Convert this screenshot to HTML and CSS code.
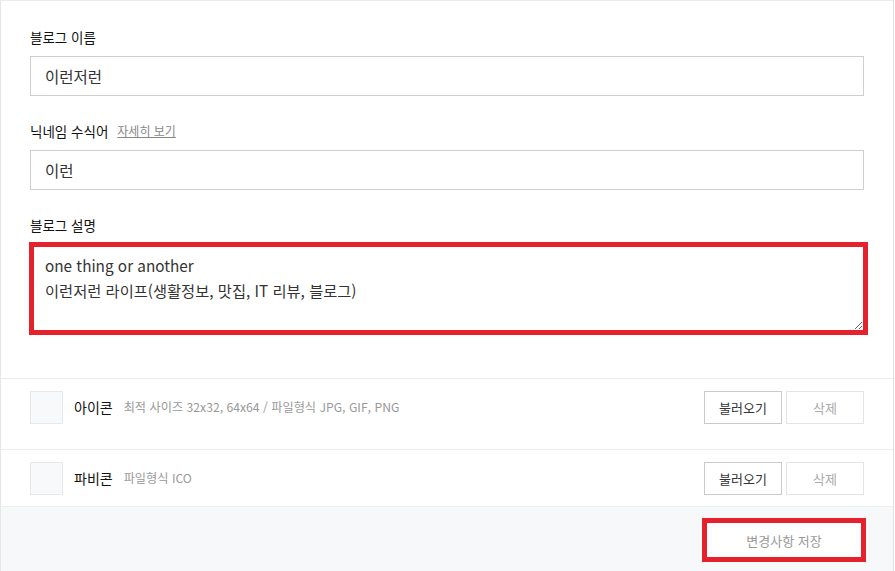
FILE: index.html
```html
<!DOCTYPE html>
<html lang="ko">
<head>
<meta charset="utf-8">
<link rel="stylesheet" href="styles.css">
</head>
<body>
<div class="panel">
  <div class="fields">
    <div class="field">
      <div class="label">블로그 이름</div>
      <input class="input" type="text" value="이런저런">
    </div>
    <div class="field">
      <div class="label">닉네임 수식어 <a class="more" href="#">자세히 보기</a></div>
      <input class="input" type="text" value="이런">
    </div>
    <div class="field">
      <div class="label label-desc">블로그 설명</div>
      <textarea class="textarea">one thing or another
이런저런 라이프(생활정보, 맛집, IT 리뷰, 블로그)</textarea>
    </div>
  </div>
  <div class="row row-first">
    <div class="thumb"></div>
    <div class="row-title">아이콘</div>
    <div class="row-desc">최적 사이즈 32x32, 64x64 / 파일형식 JPG, GIF, PNG</div>
    <div class="btns">
      <button class="btn">불러오기</button>
      <button class="btn btn-off">삭제</button>
    </div>
  </div>
  <div class="row">
    <div class="thumb"></div>
    <div class="row-title">파비콘</div>
    <div class="row-desc">파일형식 ICO</div>
    <div class="btns">
      <button class="btn">불러오기</button>
      <button class="btn btn-off">삭제</button>
    </div>
  </div>
  <div class="footer">
    <button class="save">변경사항 저장</button>
  </div>
</div>
</body>
</html>
```
FILE: styles.css
```css
* { box-sizing: border-box; }
html, body { margin: 0; padding: 0; background: #fff; }
body {
  font-family: "Noto Sans CJK KR", "Noto Sans", sans-serif;
  color: #333;
}
.panel {
  width: 894px;
  height: 571px;
  border-left: 1px solid #e6e6e6;
  border-right: 1px solid #e2e2e2;
  border-top: 1px solid #ececec;
  display: flex;
  flex-direction: column;
}
.fields {
  padding: 26px 29px 43px 29px;
  display: flex;
  flex-direction: column;
  gap: 25px;
}
.field { display: flex; flex-direction: column; }
.label {
  font-size: 13.5px;
  line-height: 20px;
  color: #111;
  font-weight: 400;
  margin-bottom: 9px;
  display: flex;
  align-items: center;
}
.label-desc { margin-bottom: 7px; }
.more {
  font-size: 12px;
  color: #888;
  text-decoration: underline;
  margin-left: 9px;
  font-weight: 400;
}
.input {
  width: 834px;
  height: 40px;
  border: 1px solid #cfcfcf;
  padding: 0 14px;
  font-family: inherit;
  font-size: 15.5px;
  color: #333;
  outline: none;
  background: #fff;
}
.textarea {
  width: 839px;
  height: 93px;
  margin-left: -1px;
  border: 5px solid #e5212b;
  padding: 6px 11px;
  font-family: inherit;
  font-size: 15.3px;
  line-height: 25px;
  color: #333;
  outline: none;
  resize: vertical;
  background: #fff;
}
.row {
  display: flex;
  align-items: center;
  padding: 12px 29px 12px 29px;
  border-top: 1px solid #ececec;
  height: 57px;
}
.row-first { height: 71px; align-items: flex-start; }
.thumb {
  width: 33px;
  height: 33px;
  background: #f8f9fb;
  border: 1px solid #e8e8e8;
}
.row-first .row-title, .row-first .row-desc { line-height: 33px; }
.row-title {
  margin-left: 11px;
  font-size: 14px;
  color: #111;
  font-weight: 400;
}
.row-desc {
  margin-left: 11px;
  font-size: 12.2px;
  color: #999;
}
.btns {
  margin-left: auto;
  display: flex;
  gap: 4px;
}
.btn {
  width: 78px;
  height: 33px;
  background: #fff;
  border: 1px solid #cacaca;
  font-family: inherit;
  font-size: 13px;
  color: #333;
  padding: 0;
}
.btn-off {
  border-color: #e4e4e4;
  color: #aaa;
}
.footer {
  flex: 1;
  background: #f7f8fa;
  border-top: 1px solid #eceef0;
  display: flex;
  justify-content: flex-end;
  align-items: flex-start;
  padding: 11px 27px 0 0;
}
.save {
  width: 164px;
  height: 44px;
  background: #fff;
  border: 5px solid #e5212b;
  font-family: inherit;
  font-size: 13px;
  color: #999;
  padding: 0;
}
```
